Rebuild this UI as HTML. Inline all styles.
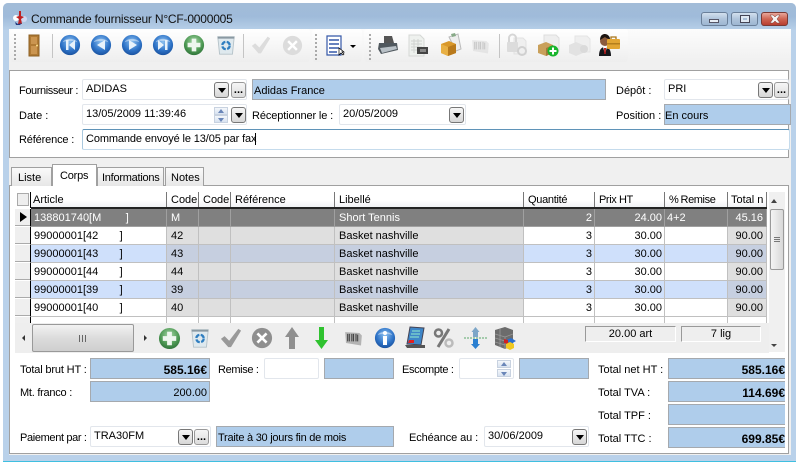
<!DOCTYPE html>
<html><head><meta charset="utf-8">
<style>
html,body{margin:0;padding:0}
body{width:799px;height:464px;position:relative;overflow:hidden;background:#fff;font:11px "Liberation Sans",sans-serif;color:#000}
div,span,svg{position:absolute;box-sizing:border-box}
.t{white-space:nowrap;line-height:13px;height:13px}
.b{background:#afcdeb;border:1px solid #a5a9ae;white-space:nowrap;line-height:22px;padding:0 1px;height:21px}
.r{text-align:right;padding-right:2px}
.i{background:#fff;border:1px solid #e2e6ec;border-radius:2px;height:21px;line-height:19px;padding-left:3px;white-space:nowrap}
.d{width:15px;height:16px;border:1px solid #777;border-radius:3px;background:linear-gradient(#f6f6f6,#d6d6d6)}
.d:after{content:"";position:absolute;left:3px;top:5px;border:4px solid transparent;border-top:5px solid #000;border-bottom:0}
.e{width:15px;height:16px;border:1px solid #999;border-radius:3px;background:linear-gradient(#f6f6f6,#dcdcdc);font:bold 11px/15px "Liberation Sans",sans-serif;text-align:center;letter-spacing:0}
.s{width:14px;height:8px;border:1px solid #c8d2e0;background:linear-gradient(#f4f7fb,#d8e2f0)}
.s:after{content:"";position:absolute;left:3px;top:1px;border:3px solid transparent;border-bottom:4px solid #6a86b8;border-top:0}
.s.n:after{border-top:4px solid #6a86b8;border-bottom:0;top:2px}
.g{width:2px;height:26px;background:repeating-linear-gradient(#aaa 0 2px,transparent 2px 4px)}
.v{width:1px;height:24px;background:#c4c4c4}
table{border-collapse:separate;border-spacing:0;table-layout:fixed;position:absolute;left:0;top:0;width:752px;font:11px "Liberation Sans",sans-serif}
td{height:18px;box-sizing:border-box;padding:2px 2px 0 4px;border-right:1px solid #c0c0c0;border-bottom:1px solid #c0c0c0;white-space:pre;overflow:hidden;line-height:15px}
tr.k td{padding-top:1px}
td.a{padding-left:3px}
td.m,tr.k td.m{background:#efefef;border-right:1px solid #000;border-bottom:1px solid #fff;padding:0;box-shadow:inset 0 -1px 0 #aaa}
td.x{background:#dfdfdf}td.u{text-align:right;padding-right:2px}
td.w{padding-right:3px}
tr.k td{background:#808080;color:#fff;border-color:#a0a0a0}
tr.k td.m{background:#efefef;color:#000}
tr.c td{background:#cfe0fb}tr.c td.x{background:#c6cfe0}tr.c td.m{background:#efefef}
.h{top:192px;height:16px;line-height:17px;background:linear-gradient(#fff 50%,#eef0f3);border-right:1px solid #777;padding-left:3px;white-space:nowrap;overflow:hidden}
</style></head><body>
<svg width="0" height="0" style="left:0;top:0">
<defs>
<radialGradient id="bl" cx=".5" cy=".35" r=".7"><stop offset="0" stop-color="#8cc0f0"/><stop offset=".6" stop-color="#2f74c8"/><stop offset="1" stop-color="#164c98"/></radialGradient>
<radialGradient id="gr" cx=".5" cy=".35" r=".7"><stop offset="0" stop-color="#a8d8a8"/><stop offset=".6" stop-color="#4f9a55"/><stop offset="1" stop-color="#2a6d35"/></radialGradient>
<symbol id="ball" viewBox="0 0 24 24"><circle cx="12" cy="12" r="11" fill="url(#bl)"/><path d="M4 9C6 4 18 4 20 9C16 7 8 7 4 9Z" fill="#fff" opacity=".45"/></symbol>
<symbol id="plus" viewBox="0 0 24 24"><circle cx="12" cy="12" r="11" fill="url(#gr)"/><path d="M9.500 5h5v4.500H19v5h-4.500V19h-5v-4.500H5v-5h4.500z" fill="#eef6ee"/></symbol>
<symbol id="trash" viewBox="0 0 24 24"><path d="M3 3h18l-2 19H5z" fill="#dfe9ee" stroke="#b5c2c8"/><path d="M3 3h18v2H3z" fill="#8a99a2"/><circle cx="12" cy="12.500" r="4" fill="none" stroke="#2f7ec0" stroke-width="2.500" stroke-dasharray="5 1.500"/></symbol>
<symbol id="chk" viewBox="0 0 24 24"><path d="M1 13l4-3 5 5L20 2l3 2-11 18h-3z" fill="currentColor"/></symbol>
<symbol id="xx" viewBox="0 0 24 24"><circle cx="12" cy="12" r="11" fill="currentColor"/><path d="M8 6l4 4 4-4 2 2-4 4 4 4-2 2-4-4-4 4-2-2 4-4-4-4z" fill="#fff"/></symbol>
<symbol id="bar" viewBox="0 0 24 24"><path d="M2 5l17 1 3 3-1 12-18-3z" fill="currentColor" opacity=".35"/><path d="M5 7v9M7 7v9M10 7v9M12 7v9M15 7v9M17 8v8" stroke="currentColor" stroke-width="1.300"/></symbol>
</defs></svg>

<!-- window -->
<div style="left:3px;top:3px;width:793px;height:458px;background:#b9d1ea;border-radius:5px 5px 0 0"></div>
<div style="left:3px;top:3px;width:793px;height:27px;background:linear-gradient(#a3bcd8,#9fbbda 50%,#b7cfe8);border-radius:5px 5px 0 0"></div>
<div style="left:3px;top:461px;width:793px;height:1px;background:#3fbfe0"></div>
<svg style="left:11px;top:9px" width="17" height="17" viewBox="0 0 17 17"><circle cx="5" cy="9" r="3" fill="#fff"/><circle cx="13" cy="10" r="3" fill="#d0d8f0"/><path d="M8 2h2v5l3 1-3 2 1 5H7l1-5-3-2 3-1z" fill="#c02020"/><path d="M4 13l3 2 4-1-2 2H5z" fill="#223a80"/></svg>
<div class="t" style="left:31px;top:12px;font-size:12px;letter-spacing:-.2px;line-height:15px;height:15px;color:#111">Commande fournisseur N°CF-0000005</div>
<!-- caption buttons -->
<div style="left:701px;top:12px;width:27px;height:14px;border:1px solid #6a7f99;border-radius:3px;background:linear-gradient(#d3e0ee,#afc4db 50%,#9db6d1)"><div style="left:7px;top:6px;width:10px;height:4px;background:#e8eef5;border:1px solid #556"></div></div>
<div style="left:731px;top:12px;width:27px;height:14px;border:1px solid #6a7f99;border-radius:3px;background:linear-gradient(#d3e0ee,#afc4db 50%,#9db6d1)"><div style="left:8px;top:2px;width:10px;height:8px;background:#dfe8f2;border:1px solid #445"></div><div style="left:11px;top:5px;width:4px;height:2px;background:#a9bed6"></div></div>
<div style="left:761px;top:12px;width:27px;height:14px;border:1px solid #7a3a34;border-radius:3px;background:linear-gradient(#e8a79b,#cf6553 50%,#b83e30)"><svg style="left:6px;top:1px" width="14" height="10" viewBox="0 0 14 10"><path d="M2 1h3l2 2 2-2h3L9 5l3 4H9L7 7 5 9H2l3-4z" fill="#f4f4f4" stroke="#7a3a34" stroke-width=".5"/></svg></div>

<!-- client -->
<div style="left:9px;top:29px;width:782px;height:426px;background:#f0f0f0"></div>
<div style="left:9px;top:29px;width:782px;height:33px;background:linear-gradient(#fcfcfc,#f0f0f0)"></div>
<div style="left:10px;top:29px;width:300px;height:33px;background:linear-gradient(#fff,#eee);border-radius:3px"></div>
<div style="left:312px;top:29px;width:50px;height:33px;background:linear-gradient(#fff,#eee);border-radius:3px"></div>
<div style="left:364px;top:29px;width:264px;height:33px;background:linear-gradient(#fff,#eee);border-radius:3px"></div>

<!-- toolbar -->
<div class="g" style="left:14px;top:34px"></div>
<svg style="left:28px;top:34px" width="12" height="23" viewBox="0 0 12 23"><path d="M1 1h10v21H1z" fill="#b07a34" stroke="#8c6024"/><path d="M3 3h6v7H3zM3 12h6v8H3z" fill="#cb9550"/><circle cx="9" cy="11.500" r="1" fill="#ffe08a"/></svg>
<div class="v" style="left:52px;top:34px"></div>
<svg style="left:59px;top:34px" width="22" height="22"><use href="#ball"/><path d="M7 6h2.500v10H7zM16 6v10l-6-5z" fill="#e8f2fb"/></svg>
<svg style="left:90px;top:34px" width="22" height="22"><use href="#ball"/><path d="M15 6v10L7 11z" fill="#e8f2fb"/></svg>
<svg style="left:121px;top:34px" width="22" height="22"><use href="#ball"/><path d="M8 6v10l8-5z" fill="#e8f2fb"/></svg>
<svg style="left:152px;top:34px" width="22" height="22"><use href="#ball"/><path d="M6 6v10l6-5zM13 6h2.500v10H13z" fill="#e8f2fb"/></svg>
<svg style="left:183px;top:34px" width="22" height="22"><use href="#plus"/></svg>
<svg style="left:215px;top:34px" width="22" height="22"><use href="#trash"/></svg>
<div class="v" style="left:243px;top:34px"></div>
<svg style="left:250px;top:35px;color:#dcdcdc" width="22" height="20"><use href="#chk"/></svg>
<svg style="left:282px;top:35px;color:#dcdcdc" width="21" height="21"><use href="#xx"/></svg>
<div class="g" style="left:315px;top:34px"></div>
<svg style="left:326px;top:35px" width="20" height="21" viewBox="0 0 20 21"><path d="M1 1h14v19H1z" fill="#fff" stroke="#3558a8" stroke-width="1.200"/><path d="M3 5h10M3 9h10M3 13h10M3 17h8" stroke="#3558a8" stroke-width="1.500"/><path d="M13 13v7l2-2 2 2 1-1-2-2h2z" fill="#fff" stroke="#000" stroke-width=".7"/></svg>
<div style="left:350px;top:45px;border:3px solid transparent;border-top:3px solid #000;border-bottom:0"></div>
<div class="g" style="left:369px;top:34px"></div>
<svg style="left:377px;top:34px" width="22" height="22" viewBox="0 0 22 22"><path d="M7 2h8l2 7H7z" fill="#555"/><path d="M2 9h18l1 7-17 4-3-5z" fill="#50585e"/><path d="M3 14l16-2 1 3-15 4z" fill="#b8c0c6"/></svg>
<svg style="left:407px;top:34px" width="24" height="24" viewBox="0 0 24 24"><path d="M2 1h11l4 4v17H2z" fill="#eef1ee" stroke="#d5d8d5"/><path d="M4 7h11M4 10h11M4 13h11M4 16h8M7 5v14M11 5v14" stroke="#d0d4d0"/><path d="M10 13h11v7H10z" fill="#444"/><path d="M13 15h6v3h-6z" fill="#888"/></svg>
<svg style="left:440px;top:33px" width="22" height="24" viewBox="0 0 22 24"><path d="M9 4l9-3 3 15-5 2z" fill="#eee" stroke="#bbb"/><path d="M11 1l4-1 1 3-4 1z" fill="#8a8"/><path d="M1 11l8-3 7 3v9l-8 3-7-3z" fill="#d9982a"/><path d="M1 11l7 3v9l-7-3z" fill="#e8b044"/><path d="M8 14l8-3v9l-8 3z" fill="#b97a1c"/></svg>
<svg style="left:470px;top:36px;color:#c8c8c8" width="21" height="20"><use href="#bar"/></svg>
<div class="v" style="left:499px;top:34px"></div>
<svg style="left:505px;top:33px" width="23" height="24" viewBox="0 0 23 24"><path d="M9 5h9l3 3v13H9z" fill="#efefef" stroke="#e2e2e2"/><rect x="2" y="9" width="11" height="10" rx="1" fill="#dcdcdc"/><path d="M4 9V5a3.500 3.500 0 0 1 7 0v4" fill="none" stroke="#d6d6d6" stroke-width="2"/><circle cx="17" cy="18" r="4" fill="none" stroke="#d0d0d0" stroke-width="2"/></svg>
<svg style="left:537px;top:34px" width="24" height="24" viewBox="0 0 24 24"><path d="M7 1h12l3 3v13H7z" fill="#eee" stroke="#ddd"/><path d="M1 11l8-3 7 3v8l-7 3-8-3z" fill="#c9a05a"/><path d="M9 14l7-3v8l-7 3z" fill="#a07a3c"/><circle cx="16" cy="17" r="5.500" fill="#18b52c"/><path d="M15 13.500h2V16h2.500v2H17v2.500h-2V18h-2.500v-2H15z" fill="#fff"/></svg>
<svg style="left:568px;top:35px" width="23" height="22" viewBox="0 0 23 22"><path d="M7 1h12l3 3v13H7z" fill="#efefef" stroke="#e4e4e4"/><path d="M1 10l7-3 7 3v8l-7 3-7-3z" fill="#e2e2e2"/><circle cx="16" cy="14" r="4" fill="#dadada"/></svg>
<svg style="left:598px;top:33px" width="24" height="25" viewBox="0 0 24 25"><path d="M1 23c0-7 3-9 6-9s6 2 6 9z" fill="#15161a"/><path d="M5 14l2 7 2-7z" fill="#fff"/><path d="M6 15h2l-.3 6H6.300z" fill="#b81818"/><circle cx="7" cy="8" r="5" fill="#8a5a3c"/><path d="M2 7c0-5 3-6 5-6s5 2 5 5c-3 0-5-2-5-2z" fill="#1d1512"/><rect x="9" y="6" width="13" height="10" rx="1" fill="#e2a532"/><path d="M13 6V4h5v2" fill="none" stroke="#a87418" stroke-width="1.300"/><path d="M9 10h13v1.500H9z" fill="#b47e1c"/></svg>

<!-- top panel -->
<div style="left:9px;top:70px;width:780px;height:88px;background:#fff;border:1px solid #a0a0a0"></div>
<div class="t" style="left:19px;top:85px;letter-spacing:-.4px">Fournisseur :</div>
<div class="i" style="left:82px;top:79px;width:165px">ADIDAS</div>
<div class="d" style="left:214px;top:82px"></div><div class="e" style="left:231px;top:82px">...</div>
<div class="b" style="left:252px;top:79px;width:354px">Adidas France</div>
<div class="t" style="left:616px;top:85px">Dépôt :</div>
<div class="i" style="left:664px;top:79px;width:125px">PRI</div>
<div class="d" style="left:758px;top:82px"></div><div class="e" style="left:774px;top:82px">...</div>

<div class="t" style="left:19px;top:110px">Date :</div>
<div class="i" style="left:82px;top:104px;width:165px">13/05/2009 11:39:46</div>
<div class="s" style="left:214px;top:107px"></div><div class="s n" style="left:214px;top:115px"></div>
<div class="d" style="left:231px;top:107px"></div>
<div class="t" style="left:252px;top:110px;letter-spacing:-.12px">Réceptionner le :</div>
<div class="i" style="left:339px;top:104px;width:127px">20/05/2009</div>
<div class="d" style="left:449px;top:107px"></div>
<div class="t" style="left:616px;top:110px">Position :</div>
<div class="b" style="left:664px;top:104px;width:127px;padding-left:0">En cours</div>

<div class="t" style="left:19px;top:134px;letter-spacing:-.15px">Référence :</div>
<div class="i" style="left:82px;top:129px;width:708px;border:1px solid #c5dbec;border-top-color:#5f93b8;border-left-color:#a9c8de;letter-spacing:-.12px">Commande envoyé le 13/05 par fax<span style="position:static;border-left:1px solid #000;margin-left:-1px"></span></div>

<!-- tabs -->
<div style="left:9px;top:185px;width:780px;height:269px;background:#fff;border:1px solid #a0a0a0"></div>
<div style="left:11px;top:167px;width:41px;height:19px;background:linear-gradient(#fafafa,#e6e6e6);border:1px solid #a0a0a0;border-bottom:0;line-height:20px;padding-left:6px">Liste</div>
<div style="left:52px;top:164px;width:45px;height:22px;background:#fff;border:1px solid #a0a0a0;border-bottom:0;line-height:23px;padding-left:7px;z-index:2;letter-spacing:-.2px">Corps</div>
<div style="left:97px;top:167px;width:67px;height:19px;background:linear-gradient(#fafafa,#e6e6e6);border:1px solid #a0a0a0;border-bottom:0;line-height:20px;padding-left:4px;letter-spacing:-.25px;white-space:nowrap">Informations</div>
<div style="left:165px;top:167px;width:39px;height:19px;background:linear-gradient(#fafafa,#e6e6e6);border:1px solid #a0a0a0;border-bottom:0;line-height:20px;padding-left:5px">Notes</div>

<!-- grid header -->
<div style="left:15px;top:192px;width:16px;height:16px;background:#fff;border-right:1px solid #000"><div style="left:2px;top:1px;width:12px;height:13px;background:#eee;border:1px solid #aaa"></div></div>
<div class="h" style="left:31px;width:136px;padding-left:2px">Article</div>
<div class="h" style="left:167px;width:32px;padding-left:4px">Code</div>
<div class="h" style="left:199px;width:32px;padding-left:4px">Code</div>
<div class="h" style="left:231px;width:104px;padding-left:4px">Référence</div>
<div class="h" style="left:335px;width:189px;padding-left:4px">Libellé</div>
<div class="h" style="left:524px;width:71px;padding-left:4px;letter-spacing:-.3px">Quantité</div>
<div class="h" style="left:595px;width:70px;padding-left:4px;letter-spacing:-.4px">Prix HT</div>
<div class="h" style="left:665px;width:63px;padding-left:4px;letter-spacing:-.4px;word-spacing:-.5px">% Remise</div>
<div class="h" style="left:728px;width:39px">Total n</div>
<div style="left:31px;top:207px;width:736px;height:2px;background:#222"></div>

<div style="left:15px;top:209px;width:752px;height:114px;overflow:hidden">
<table><colgroup><col style="width:16px"><col style="width:136px"><col style="width:32px"><col style="width:32px"><col style="width:104px"><col style="width:189px"><col style="width:71px"><col style="width:70px"><col style="width:63px"><col style="width:39px"></colgroup>
<tr class="k"><td class="m" style="position:relative"><div style="left:5px;top:3px;border:5px solid transparent;border-left:7px solid #000;border-right:0"></div></td><td class="a">138801740[M        ]</td><td>M</td><td></td><td></td><td>Short Tennis</td><td class="u">2</td><td class="u">24.00</td><td style="padding-left:2px">4+2</td><td class="u w">45.16</td></tr>
<tr><td class="m"></td><td class="a">99000001[42       ]</td><td class="x">42</td><td class="x"></td><td class="x"></td><td class="x">Basket nashville</td><td class="u">3</td><td class="u">30.00</td><td></td><td class="x u w">90.00</td></tr>
<tr class="c"><td class="m"></td><td class="a">99000001[43       ]</td><td class="x">43</td><td class="x"></td><td class="x"></td><td class="x">Basket nashville</td><td class="u">3</td><td class="u">30.00</td><td></td><td class="x u w">90.00</td></tr>
<tr><td class="m"></td><td class="a">99000001[44       ]</td><td class="x">44</td><td class="x"></td><td class="x"></td><td class="x">Basket nashville</td><td class="u">3</td><td class="u">30.00</td><td></td><td class="x u w">90.00</td></tr>
<tr class="c"><td class="m"></td><td class="a">99000001[39       ]</td><td class="x">39</td><td class="x"></td><td class="x"></td><td class="x">Basket nashville</td><td class="u">3</td><td class="u">30.00</td><td></td><td class="x u w">90.00</td></tr>
<tr><td class="m"></td><td class="a">99000001[40       ]</td><td class="x">40</td><td class="x"></td><td class="x"></td><td class="x">Basket nashville</td><td class="u">3</td><td class="u">30.00</td><td></td><td class="x u w">90.00</td></tr>
<tr><td class="m"></td><td></td><td></td><td></td><td></td><td></td><td></td><td></td><td></td><td></td></tr>
</table></div>

<!-- v scrollbar -->
<div style="left:769px;top:192px;width:16px;height:160px;background:#f0f0f0"></div>
<div style="left:771px;top:199px;border:3px solid transparent;border-bottom:4px solid #444;border-top:0"></div>
<div style="left:771px;top:344px;border:3px solid transparent;border-top:3px solid #444;border-bottom:0"></div>
<div style="left:770px;top:209px;width:14px;height:61px;border:1px solid #9a9a9a;border-radius:2px;background:linear-gradient(90deg,#f4f4f4,#d8d8d8)"><div style="left:3px;top:27px;width:6px;height:5px;border-top:1px solid #777;border-bottom:1px solid #777"></div><div style="left:3px;top:29px;width:6px;height:1px;background:#777"></div></div>

<!-- grid toolbar -->
<div style="left:15px;top:323px;width:754px;height:30px;background:#eee"></div>
<div style="left:22px;top:335px;border:3px solid transparent;border-right:3px solid #333;border-left:0"></div>
<div style="left:144px;top:335px;border:3px solid transparent;border-left:3px solid #333;border-right:0"></div>
<div style="left:32px;top:324px;width:102px;height:28px;border:1px solid #999;border-radius:2px;background:linear-gradient(#f2f2f2,#dcdcdc 50%,#cfcfcf)"><div style="left:46px;top:10px;width:7px;height:7px;border-left:1px solid #666;border-right:1px solid #666"></div><div style="left:49px;top:10px;width:1px;height:7px;background:#666"></div></div>
<svg style="left:158px;top:327px" width="23" height="23"><use href="#plus"/></svg>
<svg style="left:189px;top:327px" width="22" height="22"><use href="#trash"/></svg>
<svg style="left:219px;top:327px;color:#999" width="24" height="22"><use href="#chk"/></svg>
<svg style="left:251px;top:327px;color:#8f8f8f" width="22" height="22"><use href="#xx"/></svg>
<svg style="left:284px;top:326px" width="16" height="24" viewBox="0 0 16 24"><path d="M8 1l7 10h-4v12H5V11H1z" fill="#8f8f8f"/></svg>
<svg style="left:314px;top:326px" width="15" height="24" viewBox="0 0 15 24"><path d="M5 1h5v13h4L7.500 23 1 14h4z" fill="#2fc22f"/></svg>
<svg style="left:343px;top:328px;color:#444" width="21" height="20"><use href="#bar"/></svg>
<svg style="left:374px;top:327px" width="22" height="22"><use href="#ball"/><circle cx="11" cy="6" r="2" fill="#fff"/><path d="M9 9h4v9H9z" fill="#fff"/></svg>
<svg style="left:404px;top:326px" width="22" height="24" viewBox="0 0 22 24"><path d="M6 1l14 1-3 17-14-1z" fill="#3e86c8" stroke="#445"/><path d="M8 5h8M7 8h9M6 11h9" stroke="#7cc" stroke-width="1.500"/><path d="M5 14h5v3H4z" fill="#e02020"/><path d="M1 19h20v3H3z" fill="#555"/></svg>
<svg style="left:433px;top:326px" width="22" height="24" viewBox="0 0 22 24"><circle cx="5.500" cy="7" r="3.500" fill="none" stroke="#777" stroke-width="2.500"/><path d="M16 3L5 21" stroke="#777" stroke-width="3"/><circle cx="16" cy="17" r="3.500" fill="none" stroke="#bbb" stroke-width="2.500"/></svg>
<svg style="left:464px;top:326px" width="23" height="24" viewBox="0 0 23 24"><path d="M0 12h23" stroke="#5aa86a" stroke-dasharray="2 1"/><path d="M11.500 1l4 5H14v5H9V6H7.500z" fill="#7ca6c8"/><path d="M9 13h5v5h2l-4.500 5L7 18h2z" fill="#2a7fd0"/></svg>
<svg style="left:493px;top:326px" width="24" height="24" viewBox="0 0 24 24"><path d="M2 4l10-3 8 3v15l-8 4-10-4z" fill="#6c6c6c"/><path d="M2 8l10 3 8-3M2 12l10 3M2 16l10 3M7 3v18M12 11v12" stroke="#999" stroke-width=".8" fill="none"/><path d="M13 14l5-2 5 3-5 3z" fill="#2a6fd0"/><path d="M11 13l4 1v4l-4-1z" fill="#d02020"/><path d="M13 18l4-2 4 2v4l-4 2-4-2z" fill="#f0c820"/></svg>
<div style="left:585px;top:326px;width:91px;height:16px;border:1px solid #fff;border-top-color:#999;border-left-color:#999;text-align:center;line-height:15px">20.00 art</div>
<div style="left:681px;top:326px;width:80px;height:16px;border:1px solid #fff;border-top-color:#999;border-left-color:#999;text-align:center;line-height:15px">7 lig</div>

<!-- totals -->
<div class="t" style="left:20px;top:364px;letter-spacing:-.15px">Total brut HT :</div>
<div class="b r" style="left:90px;top:358px;width:120px;font-weight:bold;font-size:12px">585.16€</div>
<div class="t" style="left:218px;top:364px;letter-spacing:-.35px">Remise :</div>
<div class="i" style="left:264px;top:358px;width:55px"></div>
<div class="b" style="left:324px;top:358px;width:70px"></div>
<div class="t" style="left:402px;top:364px;letter-spacing:-.35px">Escompte :</div>
<div class="i" style="left:459px;top:358px;width:55px"></div>
<div class="s" style="left:497px;top:360px"></div><div class="s n" style="left:497px;top:369px"></div>
<div class="b" style="left:519px;top:358px;width:70px"></div>
<div class="t" style="left:598px;top:364px">Total net HT :</div>
<div class="b r" style="left:668px;top:358px;width:117px;font-weight:bold;font-size:12px;border-right:0;padding-right:0">585.16€</div>
<div class="t" style="left:20px;top:387px;letter-spacing:-.25px">Mt. franco :</div>
<div class="b r" style="left:90px;top:381px;width:120px">200.00</div>
<div class="t" style="left:598px;top:387px">Total TVA :</div>
<div class="b r" style="left:668px;top:381px;width:117px;font-weight:bold;font-size:12px;border-right:0;padding-right:0">114.69€</div>
<div class="t" style="left:598px;top:410px">Total TPF :</div>
<div class="b r" style="left:668px;top:404px;width:117px;border-right:0"></div>
<div class="t" style="left:20px;top:432px;letter-spacing:-.35px">Paiement par :</div>
<div class="i" style="left:90px;top:426px;width:121px">TRA30FM</div>
<div class="d" style="left:178px;top:429px"></div><div class="e" style="left:194px;top:429px">...</div>
<div class="b" style="left:216px;top:426px;width:178px;letter-spacing:-.25px">Traite à 30 jours fin de mois</div>
<div class="t" style="left:409px;top:432px;letter-spacing:-.1px">Echéance au :</div>
<div class="i" style="left:484px;top:426px;width:105px">30/06/2009</div>
<div class="d" style="left:572px;top:429px"></div>
<div class="t" style="left:598px;top:433px">Total TTC :</div>
<div class="b r" style="left:668px;top:427px;width:117px;font-weight:bold;font-size:12px;border-right:0;padding-right:0">699.85€</div>
</body></html>
